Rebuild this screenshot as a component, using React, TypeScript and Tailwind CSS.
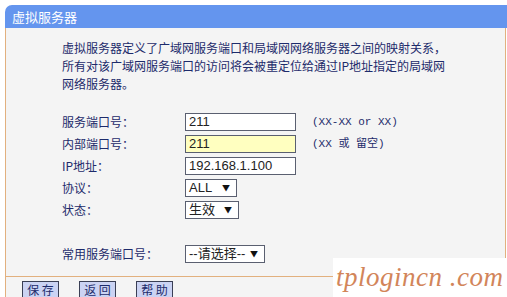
import React from "react";

const cn = '"Noto Sans CJK SC", "Liberation Sans", sans-serif';
const arial = '"Liberation Sans", "Noto Sans CJK SC", sans-serif';

function Row({ label, children, className = "" }: { label: string; children?: React.ReactNode; className?: string }) {
  return (
    <div className={"flex h-[22px] items-center " + className}>
      <div className="w-[123px] text-[12px] text-[#1d2b6b]">{label}</div>
      {children}
    </div>
  );
}

function Select({ value, w }: { value: string; w: string }) {
  return (
    <div
      className={`flex h-[18px] items-center justify-between border border-[#5a5f70] bg-white pl-[3px] pr-[6px] text-[13px] text-[#222] ${w}`}
    >
      <span style={{ fontFamily: arial }}>{value}</span>
      <span className="text-[8px] text-[#111]">▼</span>
    </div>
  );
}

export default function App() {
  return (
    <div
      className="relative h-[297px] w-[507px] overflow-hidden bg-white pl-[5px] pt-[5px]"
      style={{ fontFamily: cn }}
    >
      <div className="h-[23px] rounded-tl-[7px] bg-[#6495ee] pl-[7px] text-[13px] leading-[23px] text-white">
        虚拟服务器
      </div>
      <div className="mr-[1px] border-b border-l border-r border-[#e2b07e] bg-[#f4f4f4] pb-[11px] pl-[56px] pt-[11px]">
        <div className="text-[12px] leading-[18px] text-[#1d2b6b]">
          虚拟服务器定义了广域网服务端口和局域网网络服务器之间的映射关系，
          <br />
          所有对该广域网服务端口的访问将会被重定位给通过IP地址指定的局域网
          <br />
          网络服务器。
        </div>
        <div className="mt-[18px]">
          <Row label="服务端口号：">
            <div className="flex h-[18px] w-[111px] items-center border border-[#5a5f70] bg-white pl-[3px] text-[13px] text-[#222]" style={{ fontFamily: arial }}>
              211
            </div>
            <div className="ml-[16px] text-[11px] text-[#1d2b6b]" style={{ fontFamily: '"Liberation Mono", "Noto Sans CJK SC", monospace' }}>
              (XX-XX or XX)
            </div>
          </Row>
          <Row label="内部端口号：">
            <div className="flex h-[18px] w-[111px] items-center border border-[#5a5f70] bg-[#ffffc0] pl-[3px] text-[13px] text-[#222]" style={{ fontFamily: arial }}>
              211
            </div>
            <div className="ml-[16px] text-[11px] text-[#1d2b6b]" style={{ fontFamily: '"Liberation Mono", "Noto Sans CJK SC", monospace' }}>
              (XX 或 留空)
            </div>
          </Row>
          <Row label="IP地址：">
            <div className="flex h-[18px] w-[111px] items-center border border-[#5a5f70] bg-white pl-[3px] text-[13px] text-[#222]" style={{ fontFamily: arial }}>
              192.168.1.100
            </div>
          </Row>
          <Row label="协议：">
            <Select value="ALL" w="w-[52px]" />
          </Row>
          <Row label="状态：">
            <Select value="生效" w="w-[54px]" />
          </Row>
          <Row label="常用服务端口号：" className="mt-[22px]">
            <Select value="--请选择--" w="w-[80px]" />
          </Row>
        </div>
      </div>
      <div className="flex h-[30px] gap-[20px] border-l border-[#e2b07e] bg-[#f4f4f4] pl-[16px] pt-[4px]">
        {["保 存", "返 回", "帮 助"].map((b) => (
          <div
            key={b}
            className="flex h-[16px] w-[37px] items-center justify-center border border-b-0 border-[#3a3f55] bg-[#cbd3f3] text-[12px] leading-[14px] text-[#1d2b6b]"
          >
            {b}
          </div>
        ))}
      </div>
      <div
        className="absolute left-[333px] top-[258px] flex h-[39px] w-[174px] items-center whitespace-nowrap bg-white pl-[3px] text-[27px] italic tracking-[0.5px] text-[#d2855a]"
        style={{ fontFamily: '"Liberation Serif", "DejaVu Serif", serif' }}
      >
        tplogincn .com
      </div>
    </div>
  );
}
